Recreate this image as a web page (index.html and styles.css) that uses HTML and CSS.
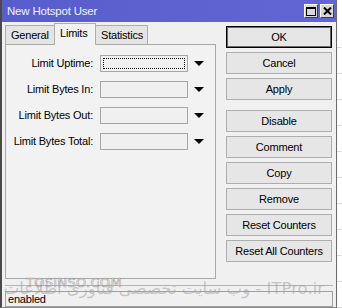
FILE: index.html
```html
<!DOCTYPE html>
<html>
<head>
	<link rel="stylesheet" href="styles.css">
</head>
<body>

	<div class="window">
		<div class="titlebar">
			<span class="title">New Hotspot User</span>
			<div class="winbtns">
				<span class="winbtn"><svg width="10" height="9" viewBox="0 0 10 9"><rect x="0.5" y="0.5" width="9" height="8" fill="none" stroke="#000"/><rect x="0" y="0" width="10" height="2" fill="#000"/></svg></span>
				<span class="winbtn"><svg width="9" height="8" viewBox="0 0 9 8"><path d="M1 0.5 L8 7.5 M8 0.5 L1 7.5" stroke="#000" stroke-width="2"/></svg></span>
			</div>
		</div>

		<div class="main">
			<div class="left">
				<div class="tabs">
					<div class="tab">General</div>
					<div class="tab active">Limits</div>
					<div class="tab">Statistics</div>
				</div>
				<div class="panel">
					<div class="row">
						<label>Limit Uptime:</label>
						<div class="field focus"><span class="dots"></span></div>
						<span class="arrow"></span>
					</div>
					<div class="row">
						<label>Limit Bytes In:</label>
						<div class="field"></div>
						<span class="arrow"></span>
					</div>
					<div class="row">
						<label>Limit Bytes Out:</label>
						<div class="field"></div>
						<span class="arrow"></span>
					</div>
					<div class="row">
						<label>Limit Bytes Total:</label>
						<div class="field"></div>
						<span class="arrow"></span>
					</div>
				</div>
			</div>

			<div class="buttons">
				<div class="btn default">OK</div>
				<div class="btn">Cancel</div>
				<div class="btn">Apply</div>
				<div class="btn spaced">Disable</div>
				<div class="btn">Comment</div>
				<div class="btn">Copy</div>
				<div class="btn">Remove</div>
				<div class="btn">Reset Counters</div>
				<div class="btn">Reset All Counters</div>
			</div>
		</div>

		<div class="footer">
			<div class="separator"></div>
			<div class="status">enabled</div>
		</div>

		<!-- watermark over the status area -->
		<div class="mark-site">TOSINSO.COM</div>
		<div class="mark-itpro">وب سایت تخصصی فناوری اطلاعات - ITPro.ir</div>
	</div>
	<div class="behind"></div>

</body>
</html>
```

FILE: styles.css
```css
*, html, body{
	margin: 0;
	padding: 0;
	box-sizing: border-box;
}
body{
	width: 342px;
	height: 308px;
	overflow: hidden;
	display: flex;
	background: #fff;
	font-family: "Liberation Sans", Arial, sans-serif;
	font-size: 11px;
	letter-spacing: -0.2px;
	color: #000;
}
.window{
	width: 337px;
	height: 308px;
	position: relative;
	display: flex;
	flex-direction: column;
	background: #f0f0f0;
	border-left: 2px solid #4a4a4a;
	border-right: 1px solid #6a6a6a;
	border-bottom: 1px solid #8a8a8a;
}
.behind{
	flex: 1;
	background: #fff;
	background-image: repeating-linear-gradient(180deg, transparent 0, transparent 25px, #d8d8d8 25px, #d8d8d8 26px);
	background-position: 0 22px;
}

/* title bar */
.titlebar{
	height: 22px;
	display: flex;
	align-items: center;
	justify-content: space-between;
	padding: 0 2px 0 5px;
	background: linear-gradient(90deg, #585dcc, #6166d3);
	color: #f4f4ff;
	font-size: 11.5px;
}
.winbtns{
	display: flex;
	gap: 2px;
}
.winbtn{
	width: 14px;
	height: 14px;
	display: flex;
	align-items: center;
	justify-content: center;
	background: #d8d8dc;
	border: 1px solid;
	border-color: #fff #404040 #404040 #fff;
}

/* body */
.main{
	height: 262px;
	display: flex;
	gap: 10px;
	padding-left: 3px;
}
.left{
	width: 211px;
	padding-top: 1px;
}
.tabs{
	height: 21px;
	display: flex;
	align-items: flex-end;
}
.tab{
	height: 19px;
	padding: 0 5px;
	display: flex;
	align-items: center;
	background: #e4e4e4;
	border: 1px solid #adadad;
	border-bottom: none;
	margin-right: -1px;
}
.tab:first-child{
	width: 50px;
}
.tab.active{
	height: 22px;
	width: 42px;
	margin-bottom: -1px;
	position: relative;
	z-index: 1;
	background: #f2f2f2;
	padding-bottom: 3px;
}
.tab:last-child{
	width: 53px;
}
.panel{
	height: 235px;
	background: #f2f2f2;
	border: 1px solid #a9a9a9;
	padding-top: 9px;
	display: flex;
	flex-direction: column;
	gap: 8px;
}
.row{
	height: 18px;
	display: flex;
	align-items: center;
}
.row label{
	width: 87px;
	text-align: right;
	margin-right: 7px;
}
.field{
	width: 88px;
	height: 17px;
	border: 1px solid #a5a5a5;
	background: #f0f0f0;
	padding: 2px;
}
.field.focus .dots{
	display: block;
	width: 100%;
	height: 100%;
	border: 1px dotted #000;
}
.arrow{
	margin-left: 6px;
	width: 0;
	height: 0;
	border-left: 5px solid transparent;
	border-right: 5px solid transparent;
	border-top: 5px solid #000;
}

/* command buttons */
.buttons{
	width: 106px;
	padding-top: 4px;
	display: flex;
	flex-direction: column;
	gap: 4px;
}
.btn{
	height: 22px;
	display: flex;
	align-items: center;
	justify-content: center;
	background: #e6e6e6;
	border: 1px solid #adadad;
}
.btn.default{
	border-color: #000;
	box-shadow: inset 0 0 0 1px #6a6a6a;
}
.btn.spaced{
	margin-top: 6px;
}

/* status */
.footer{
	flex: 1;
	padding: 1px 3px 0 3px;
}
.separator{
	height: 1px;
	background: #b4b4b4;
}
.status{
	margin-top: 5px;
	height: 16px;
	border: 1px solid #a0a0a0;
	padding-left: 2px;
	line-height: 14px;
}

/* watermark */
.mark-site{
	position: absolute;
	left: 24px;
	top: 275px;
	font-family: "DejaVu Sans", sans-serif;
	font-size: 13px;
	letter-spacing: 0.3px;
	color: rgba(255,255,255,0.5);
	-webkit-text-stroke: 0.6px rgba(110,110,110,0.6);
}
.mark-itpro{
	position: absolute;
	right: 12px;
	top: 279px;
	font-family: "DejaVu Sans", sans-serif;
	font-size: 16.5px;
	letter-spacing: 0;
	color: rgba(160,160,160,0.55);
	white-space: nowrap;
}
```
